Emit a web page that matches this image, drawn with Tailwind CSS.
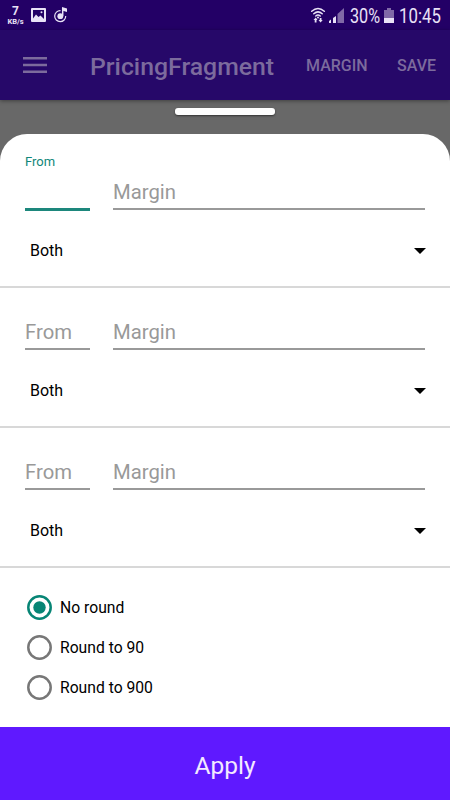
<!DOCTYPE html>
<html lang="en">
<head>
<meta charset="utf-8">
<title>Pricing</title>
<script src="https://cdn.jsdelivr.net/npm/@tailwindcss/browser@4"></script>
</head>
<body class="flex h-[800px] w-[450px] flex-col overflow-hidden bg-[#686868] font-['Roboto',sans-serif] text-black">
  <!-- Status bar -->
  <header class="flex h-[30px] shrink-0 items-center bg-[#230066] text-[#e9e2f6]">
    <div class="ml-[6px] flex w-[19px] flex-col items-center font-bold">
      <span class="text-[12px] leading-[12px]">7</span>
      <span class="text-[7.5px] leading-[9px]">KB/s</span>
    </div>
    <svg class="ml-[6px]" width="15" height="14" viewBox="0 0 15 14"><path fill="currentColor" fill-rule="evenodd" d="M1 0h13q1 0 1 1v12q0 1-1 1H1q-1 0-1-1V1q0-1 1-1zM2 2v8.500l3-4 2.500 2.500 2-1.500L13 11V2zM9.500 4.200a1 1 0 1 0 2 0 1 1 0 1 0-2 0z"/></svg>
    <svg class="ml-[8px]" width="15" height="16" viewBox="0 0 15 16" fill="none" stroke="currentColor"><path stroke-width="1.200" d="M6.500 3.700A5.500 5.500 0 1 0 11.700 9"/><circle cx="6.300" cy="9.200" r="2.900" fill="currentColor" stroke="none"/><path stroke-width="1.500" d="M8.700 9V1"/><path fill="currentColor" stroke="none" d="M8 0l5 1.500v3.500L8 3.500z"/></svg>
    <svg class="ml-[241px]" width="16" height="17" viewBox="0 0 16 17" fill="none" stroke="currentColor" stroke-linecap="round" stroke-width="1.500"><path d="M1.700 4.200Q8-1.300 14.300 4.200M3.800 6.700Q8 3 12.200 6.700M5.800 9Q8 7.200 10.200 9"/><circle cx="8" cy="10.500" r="1" fill="currentColor" stroke="none"/><path fill="currentColor" stroke="none" d="M3.500 13L5.800 10.500 7.500 13H6.500v2.500H4.700V13zM8.500 13h1.200v-2h1.800v2h1.200l-2.100 2.500z"/></svg>
    <svg class="ml-[3px]" width="15" height="15" viewBox="0 0 15 15"><path fill="currentColor" d="M0 15v-2l2-1.500V15zM4 15v-5l3-2v7z"/><path fill="#8069a7" d="M8.500 15V6L15 0v15z"/></svg>
    <div class="ml-[6px] w-[31px] pt-px"><span class="inline-block origin-left scale-x-[0.81] text-[20px] leading-[30px] whitespace-nowrap">30%</span></div>
    <svg class="ml-[3px]" width="10" height="15" viewBox="0 0 10 15"><path fill="#8069a7" d="M3 0h4v2h3v8H0V2h3z"/><path fill="currentColor" d="M0 10h10v5H0z"/></svg>
    <div class="ml-[5px] pt-px"><span class="inline-block origin-left scale-x-[0.84] text-[20px] leading-[30px]">10:45</span></div>
  </header>

  <!-- Dimmed toolbar -->
  <nav class="flex h-[70px] shrink-0 items-center bg-[#260869] text-[#7c6b9d] shadow-[0_1px_4px_rgba(0,0,0,0.4)]">
    <svg class="ml-[23px]" width="24" height="18" viewBox="0 0 24 18" fill="currentColor"><path d="M0 1h24v2.500H0zM0 7.700h24v2.500H0zM0 14.500h24V17H0z"/></svg>
    <h1 class="ml-[43px] w-[184px] pt-[3px] text-[24.800px] font-medium whitespace-nowrap">PricingFragment</h1>
    <span class="ml-[32px] w-[61px] pt-[2px] text-[16px] font-medium">MARGIN</span>
    <span class="ml-[30px] pt-[2px] text-[16px] font-medium">SAVE</span>
  </nav>

  <div class="mt-[8px] h-[7px] w-[100px] shrink-0 self-center rounded-[3px] bg-white shadow-[0_1px_2px_rgba(0,0,0,0.5)]"></div>

  <!-- Bottom sheet -->
  <main class="mt-[19px] flex grow flex-col rounded-t-[27px] bg-white pt-[14px]">
    <section class="flex h-[140px] shrink-0 flex-col border-b-2 border-[#d8d8d8]">
      <div class="flex h-[63px] gap-[23px] px-[25px]">
        <div class="w-[65px] border-b-[3px] border-[#1d877c] text-[13px] leading-[28px] text-[#11877a]">From</div>
        <div class="mb-px grow border-b-2 border-[#999] pt-[30px] text-[20.300px] leading-[29px] text-[#999]">Margin</div>
      </div>
      <div class="flex h-[75px] items-center justify-between pt-[4px] pr-[24px] pl-[30px] text-[16px]"><span class="pt-px">Both</span><svg width="12" height="6" viewBox="0 0 12 6"><path d="M0 0h12L6 6z"/></svg></div>
    </section>
    <section class="flex h-[140px] shrink-0 flex-col border-b-2 border-[#d8d8d8]">
      <div class="flex h-[62px] gap-[23px] px-[25px] pt-[30px] text-[20.300px] leading-[29px] text-[#999]">
        <div class="w-[65px] border-b-2 border-[#999]">From</div>
        <div class="grow border-b-2 border-[#999]">Margin</div>
      </div>
      <div class="flex h-[76px] items-center justify-between pt-[5px] pr-[24px] pl-[30px] text-[16px]"><span class="pt-px">Both</span><svg width="12" height="6" viewBox="0 0 12 6"><path d="M0 0h12L6 6z"/></svg></div>
    </section>
    <section class="flex h-[140px] shrink-0 flex-col border-b-2 border-[#d8d8d8]">
      <div class="flex h-[62px] gap-[23px] px-[25px] pt-[30px] text-[20.300px] leading-[29px] text-[#999]">
        <div class="w-[65px] border-b-2 border-[#999]">From</div>
        <div class="grow border-b-2 border-[#999]">Margin</div>
      </div>
      <div class="flex h-[76px] items-center justify-between pt-[5px] pr-[24px] pl-[30px] text-[16px]"><span class="pt-px">Both</span><svg width="12" height="6" viewBox="0 0 12 6"><path d="M0 0h12L6 6z"/></svg></div>
    </section>
    <div class="flex flex-col pt-[19px] pl-[27px] text-[15.700px]">
      <div class="flex h-[40px] items-center gap-[8px]"><svg width="25" height="25" viewBox="0 0 25 25"><circle cx="12.500" cy="12.500" r="11.200" fill="none" stroke="#078575" stroke-width="2.500"/><circle cx="12.500" cy="12.500" r="6.200" fill="#078575"/></svg><span class="pt-[2px]">No round</span></div>
      <div class="flex h-[40px] items-center gap-[8px]"><svg width="25" height="25" viewBox="0 0 25 25"><circle cx="12.500" cy="12.500" r="11.200" fill="none" stroke="#777" stroke-width="2.500"/></svg><span class="pt-[2px]">Round to 90</span></div>
      <div class="flex h-[40px] items-center gap-[8px]"><svg width="25" height="25" viewBox="0 0 25 25"><circle cx="12.500" cy="12.500" r="11.200" fill="none" stroke="#777" stroke-width="2.500"/></svg><span class="pt-[2px]">Round to 900</span></div>
    </div>
  </main>
  <button class="flex h-[73px] shrink-0 items-center justify-center bg-[#5f19ff] pt-[5px] text-[24.500px] text-[#f3e9ff]">Apply</button>
</body>
</html>
